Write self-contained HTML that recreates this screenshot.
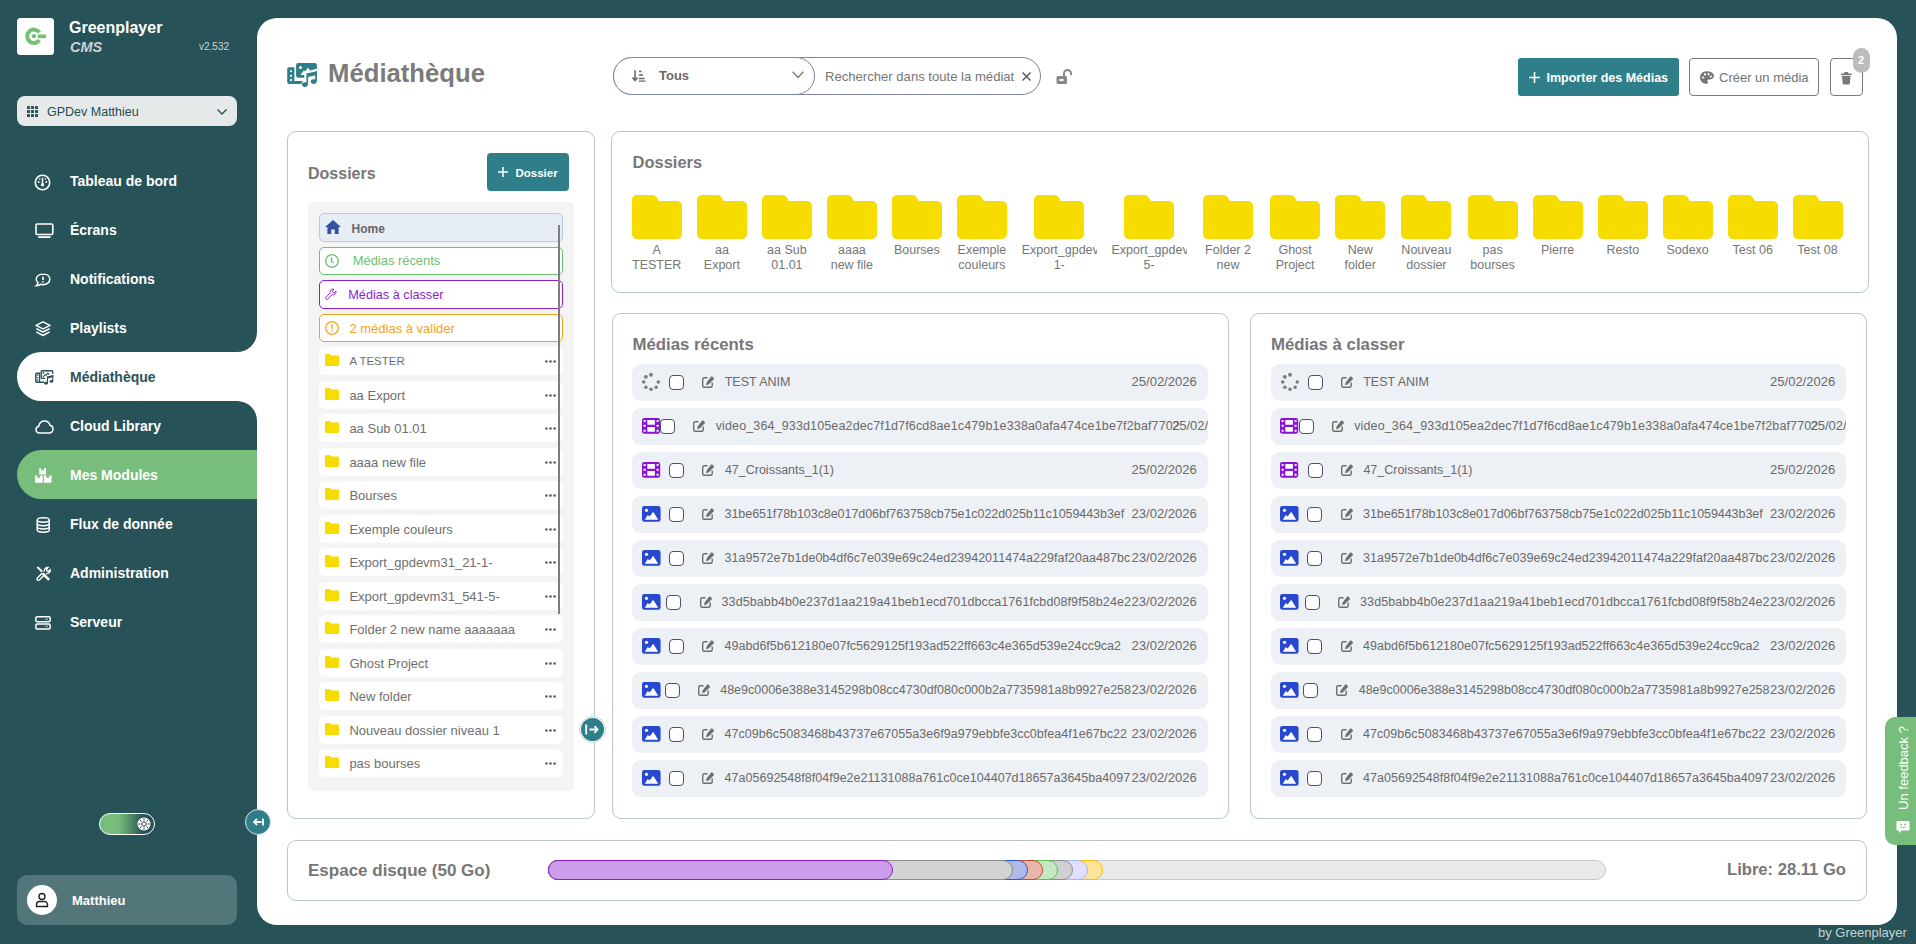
<!DOCTYPE html>
<html><head><meta charset="utf-8">
<style>
*{box-sizing:border-box;margin:0;padding:0}
html,body{width:1916px;height:944px;overflow:hidden}
body{background:#275258;font-family:"Liberation Sans",sans-serif;position:relative}
.a{position:absolute}
.t{position:absolute;white-space:nowrap;line-height:1}
svg{position:absolute;overflow:visible}
#main{left:257px;top:18px;width:1640px;height:907px;background:#fff;border-radius:20px}
.nav{color:#fff;font-size:14px;font-weight:bold}
.card{border:1px solid #b7c8ca;border-radius:9px;background:#fff}
.h{color:#777;font-weight:bold}
.fold{background:#fff;border-radius:6px;height:28px;left:319px;width:244px}
.ftx{color:#6f6f6f;font-size:13px}
.dots{left:545px;width:11px;height:3px}
.row{background:#edf0f4;border-radius:9px;height:37px;overflow:hidden}
.rt{color:#6a6a6a;font-size:13px}
.cb{width:15px;height:15px;border:1px solid #4b4f6b;border-radius:4px;background:#fff}
.fl{color:#767676;font-size:12.5px;text-align:center;line-height:15px;white-space:normal}
</style></head><body>
<!-- main panel -->
<div class="a" id="main"></div>


<!-- header -->
<svg style="left:282px;top:56px" width="40" height="36" viewBox="0 0 40 36">
 <path d="M7.2 11.2H12.4V25H20.8L19.2 27.9H7.2a2 2 0 0 1-2-2V13.2a2 2 0 0 1 2-2z" fill="#2e7f89"/>
 <rect x="8" y="14.2" width="1.9" height="1.9" rx=".5" fill="#fff"/><rect x="8" y="18.8" width="1.9" height="1.9" rx=".5" fill="#fff"/><rect x="8" y="23.1" width="1.9" height="1.9" rx=".5" fill="#fff"/>
 <rect x="14.1" y="7.1" width="20.8" height="14.7" rx="2.2" fill="#2e7f89"/>
 <circle cx="18.5" cy="11.5" r="1.5" fill="#fff"/>
 <path d="M18.4 18.9 L21.8 14.4 L23.2 15.2 L26 11.8 L28.3 14.6 L35.5 12.4 V31 H22.3 V18.9Z" fill="#fff"/>
 <path d="M24.4 17.6 L34.9 15.3 V19 L26 21Z" fill="#2e7f89"/>
 <rect x="24.4" y="17.6" width="1.7" height="11" fill="#2e7f89"/>
 <rect x="33.1" y="15.3" width="1.8" height="10.5" fill="#2e7f89"/>
 <ellipse cx="22.9" cy="28.6" rx="2.9" ry="2.3" fill="#2e7f89"/>
 <ellipse cx="31.7" cy="25.6" rx="2.9" ry="2.3" fill="#2e7f89"/>
</svg>
<div class="t h" style="left:328px;top:61px;font-size:25.7px;color:#7b7b7b">Médiathèque</div>

<div class="a" style="left:613px;top:57px;width:428px;height:38px;border:1px solid #7d84a6;border-radius:19px;background:#fff"></div>
<div class="a" style="left:613px;top:57px;width:202px;height:38px;border:1px solid #7d84a6;border-radius:19px;background:#fff"></div>
<svg style="left:632px;top:70px" width="14" height="12" viewBox="0 0 14 12"><path d="M3 0v10M0.5 7.5 3 10.5 5.5 7.5" fill="none" stroke="#666" stroke-width="1.5"/><path d="M7 1.5h2.5M7 5h4M7 8.5h5.5M7 11.2h6.5" stroke="#666" stroke-width="1.3"/></svg>
<div class="t" style="left:659px;top:69px;color:#6a6a6a;font-size:13px;font-weight:bold">Tous</div>
<svg style="left:792px;top:71px" width="12" height="8" viewBox="0 0 12 8"><path d="M.7 .7 6 6.5 11.3 .7" fill="none" stroke="#777" stroke-width="1.3"/></svg>
<div class="t" style="left:825px;top:69.7px;color:#757575;font-size:13.1px">Rechercher dans toute la médiat</div>
<svg style="left:1022px;top:72px" width="9" height="9" viewBox="0 0 9 9"><path d="M.5 .5l8 8M8.5 .5l-8 8" stroke="#555" stroke-width="1.4"/></svg>
<svg style="left:1056px;top:69px" width="17" height="15" viewBox="0 0 17 15"><path d="M8 7V4.5a3.5 3.5 0 0 1 7 0V6" fill="none" stroke="#888" stroke-width="2"/><rect x="0.5" y="7" width="10.5" height="8" rx="1.5" fill="#888"/><rect x="3.5" y="10" width="4" height="2" fill="#fff"/></svg>

<div class="a" style="left:1518px;top:58px;width:161px;height:38px;background:#2e7f89;border-radius:3px"></div>
<svg style="left:1529px;top:72px" width="11" height="11" viewBox="0 0 11 11"><path d="M5.5 0v11M0 5.5h11" stroke="#fff" stroke-width="1.6"/></svg>
<div class="t" style="left:1546.5px;top:72px;color:#fff;font-size:12.5px;font-weight:bold">Importer des Médias</div>
<div class="a" style="left:1689px;top:58px;width:130px;height:38px;border:1px solid #7a7a7a;border-radius:4px;background:#fff"></div>
<svg style="left:1700px;top:71px" width="13" height="13" viewBox="0 0 13 13"><path d="M6.5 0.2C2.9 0.2 0 3 0 6.5s2.9 6.3 6.5 6.3c1 0 1.5-.6 1.5-1.3 0-.8-.7-1.1-.7-1.9s.6-1.2 1.4-1.2h1.6c2 0 3.7-1.5 3.7-3.6C14 2.1 10.6.2 6.5.2z" fill="#777"/><circle cx="3.2" cy="6.5" r="1.1" fill="#fff"/><circle cx="5" cy="3.4" r="1.1" fill="#fff"/><circle cx="8.5" cy="3.2" r="1.1" fill="#fff"/><circle cx="10.8" cy="5.5" r="1.1" fill="#fff"/></svg>
<div class="t" style="left:1719px;top:71px;color:#727272;font-size:13px">Créer un média</div>
<div class="a" style="left:1830px;top:58px;width:33px;height:38px;border:1px solid #7a7a7a;border-radius:4px;background:#fff"></div>
<svg style="left:1841px;top:71.5px" width="10.5" height="12.5" viewBox="0 0 11 13"><path d="M0 1.5h11v1.6H0z M3.5 0h4v1.5h-4z" fill="#7a7a7a"/><path d="M1 3.8h9l-.8 8.4c-.1.5-.4.8-.9.8H2.7c-.5 0-.8-.3-.9-.8z" fill="#7a7a7a"/></svg>
<div class="a" style="left:1853px;top:48px;width:17px;height:25px;background:#bcbcbc;border-radius:8.5px"></div>
<div class="t" style="left:1858px;top:54.5px;color:#fff;font-size:11px;font-weight:bold">2</div>

<!-- left card -->
<div class="a card" style="left:287px;top:131px;width:308px;height:688px"></div>
<div class="t h" style="left:308px;top:165.5px;font-size:16px">Dossiers</div>
<div class="a" style="left:487px;top:153px;width:82px;height:38px;background:#2e7f89;border-radius:4px"></div>
<svg style="left:498px;top:167px" width="10" height="10" viewBox="0 0 10 10"><path d="M5 0v10M0 5h10" stroke="#fff" stroke-width="1.5"/></svg>
<div class="t" style="left:515.5px;top:167.5px;color:#fff;font-size:11.5px;font-weight:bold">Dossier</div>
<div class="a" style="left:308px;top:202px;width:266px;height:589px;background:#f4f4f4;border-radius:5px"></div>
<div class="a" style="left:319px;top:213.2px;width:244px;height:28.5px;background:#e7edf5;border:1px solid #bcc8e2;border-radius:5px"></div>
<svg style="left:325px;top:219.7px" width="16" height="14" viewBox="0 0 16 14"><path d="M8 0 L16 7 H13.6 V14 H9.8 V9.5 H6.2 V14 H2.4 V7 H0Z" fill="#3552a0"/></svg>
<div class="t" style="left:351.5px;top:222.7px;color:#666;font-size:12px;font-weight:bold">Home</div>
<div class="a" style="left:319px;top:246.7px;width:244px;height:28.5px;background:#fff;border:1px solid #6cbf71;border-radius:5px"></div>
<div class="t" style="left:352.8px;top:255.2px;color:#6cbf71;font-size:12.9px">Médias récents</div>
<div class="a" style="left:319px;top:280.2px;width:244px;height:28.5px;background:#fff;border:1px solid #8a1fc8;border-radius:5px"></div>
<div class="t" style="left:348.3px;top:288.7px;color:#8a1fc8;font-size:12.7px">Médias à classer</div>
<div class="a" style="left:319px;top:313.7px;width:244px;height:28.5px;background:#fff;border:1px solid #f5a31b;border-radius:5px"></div>
<div class="t" style="left:349.4px;top:322.2px;color:#f5a31b;font-size:13px">2 médias à valider</div>
<svg style="left:325px;top:253.7px" width="14" height="14" viewBox="0 0 14 14"><circle cx="7" cy="7" r="6.3" fill="none" stroke="#6cbf71" stroke-width="1.3"/><path d="M6.6 3.2v4l2.2 1.8" fill="none" stroke="#6cbf71" stroke-width="1.3"/></svg>
<svg style="left:325px;top:288.2px" width="12" height="12" viewBox="0 0 12 12"><path d="M11 3.3 9.2 5 7.3 3.4 8.6 1.2C7 .5 5.3 1.6 5.2 3.5c0 .5.1.9.2 1.3L.9 9.3c-.5.5-.5 1.2 0 1.7s1.2.5 1.7 0l4.5-4.4c.4.1.8.2 1.3.2 1.9-.1 3-1.8 2.6-3.5z" fill="none" stroke="#8a1fc8" stroke-width="1"/></svg>
<svg style="left:325px;top:320.7px" width="14" height="14" viewBox="0 0 14 14"><circle cx="7" cy="7" r="6.3" fill="none" stroke="#f5a31b" stroke-width="1.3"/><path d="M7 3.5v4.2" stroke="#f5a31b" stroke-width="1.4"/><circle cx="7" cy="10" r=".8" fill="#f5a31b"/></svg>
<div class="a fold" style="top:347.2px"></div>
<svg style="left:325px;top:354.2px" width="14" height="12" viewBox="0 0 14 12"><path d="M0 1.2C0 .5.5 0 1.2 0h3.6l1.4 1.6h6.6c.7 0 1.2.5 1.2 1.2v8c0 .7-.5 1.2-1.2 1.2H1.2C.5 12 0 11.5 0 10.8z" fill="#f7dc00"/></svg>
<div class="t ftx" style="left:349.4px;top:355.5px;font-size:11.5px">A TESTER</div>
<svg style="left:545px;top:360.2px" width="11" height="3" viewBox="0 0 11 3" fill="#555a70"><circle cx="1.4" cy="1.5" r="1.3"/><circle cx="5.5" cy="1.5" r="1.3"/><circle cx="9.6" cy="1.5" r="1.3"/></svg>
<div class="a fold" style="top:380.7px"></div>
<svg style="left:325px;top:387.7px" width="14" height="12" viewBox="0 0 14 12"><path d="M0 1.2C0 .5.5 0 1.2 0h3.6l1.4 1.6h6.6c.7 0 1.2.5 1.2 1.2v8c0 .7-.5 1.2-1.2 1.2H1.2C.5 12 0 11.5 0 10.8z" fill="#f7dc00"/></svg>
<div class="t ftx" style="left:349.4px;top:388.5px">aa Export</div>
<svg style="left:545px;top:393.7px" width="11" height="3" viewBox="0 0 11 3" fill="#555a70"><circle cx="1.4" cy="1.5" r="1.3"/><circle cx="5.5" cy="1.5" r="1.3"/><circle cx="9.6" cy="1.5" r="1.3"/></svg>
<div class="a fold" style="top:414.2px"></div>
<svg style="left:325px;top:421.2px" width="14" height="12" viewBox="0 0 14 12"><path d="M0 1.2C0 .5.5 0 1.2 0h3.6l1.4 1.6h6.6c.7 0 1.2.5 1.2 1.2v8c0 .7-.5 1.2-1.2 1.2H1.2C.5 12 0 11.5 0 10.8z" fill="#f7dc00"/></svg>
<div class="t ftx" style="left:349.4px;top:422.0px">aa Sub 01.01</div>
<svg style="left:545px;top:427.2px" width="11" height="3" viewBox="0 0 11 3" fill="#555a70"><circle cx="1.4" cy="1.5" r="1.3"/><circle cx="5.5" cy="1.5" r="1.3"/><circle cx="9.6" cy="1.5" r="1.3"/></svg>
<div class="a fold" style="top:447.7px"></div>
<svg style="left:325px;top:454.7px" width="14" height="12" viewBox="0 0 14 12"><path d="M0 1.2C0 .5.5 0 1.2 0h3.6l1.4 1.6h6.6c.7 0 1.2.5 1.2 1.2v8c0 .7-.5 1.2-1.2 1.2H1.2C.5 12 0 11.5 0 10.8z" fill="#f7dc00"/></svg>
<div class="t ftx" style="left:349.4px;top:455.5px">aaaa new file</div>
<svg style="left:545px;top:460.7px" width="11" height="3" viewBox="0 0 11 3" fill="#555a70"><circle cx="1.4" cy="1.5" r="1.3"/><circle cx="5.5" cy="1.5" r="1.3"/><circle cx="9.6" cy="1.5" r="1.3"/></svg>
<div class="a fold" style="top:481.2px"></div>
<svg style="left:325px;top:488.2px" width="14" height="12" viewBox="0 0 14 12"><path d="M0 1.2C0 .5.5 0 1.2 0h3.6l1.4 1.6h6.6c.7 0 1.2.5 1.2 1.2v8c0 .7-.5 1.2-1.2 1.2H1.2C.5 12 0 11.5 0 10.8z" fill="#f7dc00"/></svg>
<div class="t ftx" style="left:349.4px;top:489.0px">Bourses</div>
<svg style="left:545px;top:494.2px" width="11" height="3" viewBox="0 0 11 3" fill="#555a70"><circle cx="1.4" cy="1.5" r="1.3"/><circle cx="5.5" cy="1.5" r="1.3"/><circle cx="9.6" cy="1.5" r="1.3"/></svg>
<div class="a fold" style="top:514.7px"></div>
<svg style="left:325px;top:521.7px" width="14" height="12" viewBox="0 0 14 12"><path d="M0 1.2C0 .5.5 0 1.2 0h3.6l1.4 1.6h6.6c.7 0 1.2.5 1.2 1.2v8c0 .7-.5 1.2-1.2 1.2H1.2C.5 12 0 11.5 0 10.8z" fill="#f7dc00"/></svg>
<div class="t ftx" style="left:349.4px;top:522.5px">Exemple couleurs</div>
<svg style="left:545px;top:527.7px" width="11" height="3" viewBox="0 0 11 3" fill="#555a70"><circle cx="1.4" cy="1.5" r="1.3"/><circle cx="5.5" cy="1.5" r="1.3"/><circle cx="9.6" cy="1.5" r="1.3"/></svg>
<div class="a fold" style="top:548.2px"></div>
<svg style="left:325px;top:555.2px" width="14" height="12" viewBox="0 0 14 12"><path d="M0 1.2C0 .5.5 0 1.2 0h3.6l1.4 1.6h6.6c.7 0 1.2.5 1.2 1.2v8c0 .7-.5 1.2-1.2 1.2H1.2C.5 12 0 11.5 0 10.8z" fill="#f7dc00"/></svg>
<div class="t ftx" style="left:349.4px;top:556.0px">Export_gpdevm31_21-1-</div>
<svg style="left:545px;top:561.2px" width="11" height="3" viewBox="0 0 11 3" fill="#555a70"><circle cx="1.4" cy="1.5" r="1.3"/><circle cx="5.5" cy="1.5" r="1.3"/><circle cx="9.6" cy="1.5" r="1.3"/></svg>
<div class="a fold" style="top:581.7px"></div>
<svg style="left:325px;top:588.7px" width="14" height="12" viewBox="0 0 14 12"><path d="M0 1.2C0 .5.5 0 1.2 0h3.6l1.4 1.6h6.6c.7 0 1.2.5 1.2 1.2v8c0 .7-.5 1.2-1.2 1.2H1.2C.5 12 0 11.5 0 10.8z" fill="#f7dc00"/></svg>
<div class="t ftx" style="left:349.4px;top:589.5px">Export_gpdevm31_541-5-</div>
<svg style="left:545px;top:594.7px" width="11" height="3" viewBox="0 0 11 3" fill="#555a70"><circle cx="1.4" cy="1.5" r="1.3"/><circle cx="5.5" cy="1.5" r="1.3"/><circle cx="9.6" cy="1.5" r="1.3"/></svg>
<div class="a fold" style="top:615.2px"></div>
<svg style="left:325px;top:622.2px" width="14" height="12" viewBox="0 0 14 12"><path d="M0 1.2C0 .5.5 0 1.2 0h3.6l1.4 1.6h6.6c.7 0 1.2.5 1.2 1.2v8c0 .7-.5 1.2-1.2 1.2H1.2C.5 12 0 11.5 0 10.8z" fill="#f7dc00"/></svg>
<div class="t ftx" style="left:349.4px;top:623.0px">Folder 2 new name aaaaaaa</div>
<svg style="left:545px;top:628.2px" width="11" height="3" viewBox="0 0 11 3" fill="#555a70"><circle cx="1.4" cy="1.5" r="1.3"/><circle cx="5.5" cy="1.5" r="1.3"/><circle cx="9.6" cy="1.5" r="1.3"/></svg>
<div class="a fold" style="top:648.7px"></div>
<svg style="left:325px;top:655.7px" width="14" height="12" viewBox="0 0 14 12"><path d="M0 1.2C0 .5.5 0 1.2 0h3.6l1.4 1.6h6.6c.7 0 1.2.5 1.2 1.2v8c0 .7-.5 1.2-1.2 1.2H1.2C.5 12 0 11.5 0 10.8z" fill="#f7dc00"/></svg>
<div class="t ftx" style="left:349.4px;top:656.5px">Ghost Project</div>
<svg style="left:545px;top:661.7px" width="11" height="3" viewBox="0 0 11 3" fill="#555a70"><circle cx="1.4" cy="1.5" r="1.3"/><circle cx="5.5" cy="1.5" r="1.3"/><circle cx="9.6" cy="1.5" r="1.3"/></svg>
<div class="a fold" style="top:682.2px"></div>
<svg style="left:325px;top:689.2px" width="14" height="12" viewBox="0 0 14 12"><path d="M0 1.2C0 .5.5 0 1.2 0h3.6l1.4 1.6h6.6c.7 0 1.2.5 1.2 1.2v8c0 .7-.5 1.2-1.2 1.2H1.2C.5 12 0 11.5 0 10.8z" fill="#f7dc00"/></svg>
<div class="t ftx" style="left:349.4px;top:690.0px">New folder</div>
<svg style="left:545px;top:695.2px" width="11" height="3" viewBox="0 0 11 3" fill="#555a70"><circle cx="1.4" cy="1.5" r="1.3"/><circle cx="5.5" cy="1.5" r="1.3"/><circle cx="9.6" cy="1.5" r="1.3"/></svg>
<div class="a fold" style="top:715.7px"></div>
<svg style="left:325px;top:722.7px" width="14" height="12" viewBox="0 0 14 12"><path d="M0 1.2C0 .5.5 0 1.2 0h3.6l1.4 1.6h6.6c.7 0 1.2.5 1.2 1.2v8c0 .7-.5 1.2-1.2 1.2H1.2C.5 12 0 11.5 0 10.8z" fill="#f7dc00"/></svg>
<div class="t ftx" style="left:349.4px;top:723.5px">Nouveau dossier niveau 1</div>
<svg style="left:545px;top:728.7px" width="11" height="3" viewBox="0 0 11 3" fill="#555a70"><circle cx="1.4" cy="1.5" r="1.3"/><circle cx="5.5" cy="1.5" r="1.3"/><circle cx="9.6" cy="1.5" r="1.3"/></svg>
<div class="a fold" style="top:749.2px"></div>
<svg style="left:325px;top:756.2px" width="14" height="12" viewBox="0 0 14 12"><path d="M0 1.2C0 .5.5 0 1.2 0h3.6l1.4 1.6h6.6c.7 0 1.2.5 1.2 1.2v8c0 .7-.5 1.2-1.2 1.2H1.2C.5 12 0 11.5 0 10.8z" fill="#f7dc00"/></svg>
<div class="t ftx" style="left:349.4px;top:757.0px">pas bourses</div>
<svg style="left:545px;top:762.2px" width="11" height="3" viewBox="0 0 11 3" fill="#555a70"><circle cx="1.4" cy="1.5" r="1.3"/><circle cx="5.5" cy="1.5" r="1.3"/><circle cx="9.6" cy="1.5" r="1.3"/></svg>
<div class="a" style="left:558px;top:225px;width:2px;height:389px;background:#7e7e7e"></div>
<div class="a" style="left:579px;top:716px;width:27px;height:27px;border-radius:14px;background:#fff;border:1px solid #c6d6d8"></div>
<div class="a" style="left:581px;top:718px;width:23px;height:23px;border-radius:12px;background:#2e7f89"></div>
<svg style="left:585px;top:723px" width="14" height="13" viewBox="0 0 14 13"><path d="M1.2 1.5v10M4.5 6.5h8M9.5 3.2l3 3.3-3 3.3" fill="none" stroke="#fff" stroke-width="1.8"/></svg>







<!-- bottom start -->
<div class="a card" style="left:287px;top:839.5px;width:1579.5px;height:61px"></div>
<div class="t h" style="left:308px;top:862px;font-size:17px">Espace disque (50 Go)</div>
<div class="t h" style="left:1727px;top:862px;font-size:16.6px;text-align:right">Libre: 28.11 Go</div>
<div class="a" style="left:547.5px;top:860px;width:1058.0px;height:20px;background:#e9e9e9;border:1px solid #c9c9c9;border-radius:10px"></div>
<div class="a" style="left:547.5px;top:860px;width:555.4px;height:20px;background:#fde49b;border:1.2px solid #f9bd10;border-radius:10px"></div>
<div class="a" style="left:547.5px;top:860px;width:540.2px;height:20px;background:#e0e0fd;border:1.2px solid #abb2fb;border-radius:10px"></div>
<div class="a" style="left:547.5px;top:860px;width:525.1px;height:20px;background:#d0d0d0;border:1.2px solid #8c8c8c;border-radius:10px"></div>
<div class="a" style="left:547.5px;top:860px;width:510.5px;height:20px;background:#c2e9c0;border:1.2px solid #5fc15a;border-radius:10px"></div>
<div class="a" style="left:547.5px;top:860px;width:495.2px;height:20px;background:#e8b7a9;border:1.2px solid #cf4b2f;border-radius:10px"></div>
<div class="a" style="left:547.5px;top:860px;width:480.1px;height:20px;background:#aebbe9;border:1.2px solid #2f56d8;border-radius:10px"></div>
<div class="a" style="left:547.5px;top:860px;width:465.2px;height:20px;background:#d3d3d3;border:1.2px solid #8c8c8c;border-radius:10px"></div>
<div class="a" style="left:547.5px;top:860px;width:345.4px;height:20px;background:#cc9dea;border:1.2px solid #8a1fc8;border-radius:10px"></div>
<div class="a" style="left:1885px;top:717px;width:40px;height:128px;background:#77bd7b;border-radius:10px"></div>
<div class="t" style="left:1903px;top:768px;color:#fff;font-size:13px;transform:translate(-50%,-50%) rotate(-90deg)">Un feedback ?</div>
<svg style="left:1896px;top:820px" width="14" height="14" viewBox="0 0 14 14"><path d="M1.5 1h11c.6 0 1 .4 1 1v7.5c0 .6-.4 1-1 1H6l-3 2.5v-2.5H1.5c-.6 0-1-.4-1-1V2c0-.6.4-1 1-1z" fill="#fff"/><circle cx="5" cy="4.5" r=".9" fill="#77bd7b"/><circle cx="9" cy="4.5" r=".9" fill="#77bd7b"/><path d="M4.2 6.8c1.5 1.3 4.1 1.3 5.6 0" fill="none" stroke="#77bd7b" stroke-width="1"/></svg>
<!-- bottom end -->


<!-- right start -->
<div class="a card" style="left:611px;top:131px;width:1258px;height:162px"></div>
<div class="t h" style="left:632.5px;top:154px;font-size:16.5px">Dossiers</div>
<svg style="left:631.7px;top:195px" width="50" height="44" viewBox="0 0 50 44"><path d="M0 5C0 2.2 2.2 0 5 0h15.5c1.6 0 3 .8 3.9 2l2.6 4H45c2.8 0 5 2.2 5 5v28c0 2.8-2.2 5-5 5H5c-2.8 0-5-2.2-5-5z" fill="#f7dc00"/></svg>
<div class="a fl" style="left:631.7px;top:243px;width:50px;overflow:hidden"><span style="white-space:nowrap">A</span><br><span style="white-space:nowrap">TESTER</span></div>
<svg style="left:696.9px;top:195px" width="50" height="44" viewBox="0 0 50 44"><path d="M0 5C0 2.2 2.2 0 5 0h15.5c1.6 0 3 .8 3.9 2l2.6 4H45c2.8 0 5 2.2 5 5v28c0 2.8-2.2 5-5 5H5c-2.8 0-5-2.2-5-5z" fill="#f7dc00"/></svg>
<div class="a fl" style="left:696.9px;top:243px;width:50px;overflow:hidden"><span style="white-space:nowrap">aa</span><br><span style="white-space:nowrap">Export</span></div>
<svg style="left:761.9px;top:195px" width="50" height="44" viewBox="0 0 50 44"><path d="M0 5C0 2.2 2.2 0 5 0h15.5c1.6 0 3 .8 3.9 2l2.6 4H45c2.8 0 5 2.2 5 5v28c0 2.8-2.2 5-5 5H5c-2.8 0-5-2.2-5-5z" fill="#f7dc00"/></svg>
<div class="a fl" style="left:761.9px;top:243px;width:50px;overflow:hidden"><span style="white-space:nowrap">aa Sub</span><br><span style="white-space:nowrap">01.01</span></div>
<svg style="left:826.9px;top:195px" width="50" height="44" viewBox="0 0 50 44"><path d="M0 5C0 2.2 2.2 0 5 0h15.5c1.6 0 3 .8 3.9 2l2.6 4H45c2.8 0 5 2.2 5 5v28c0 2.8-2.2 5-5 5H5c-2.8 0-5-2.2-5-5z" fill="#f7dc00"/></svg>
<div class="a fl" style="left:826.9px;top:243px;width:50px;overflow:hidden"><span style="white-space:nowrap">aaaa</span><br><span style="white-space:nowrap">new file</span></div>
<svg style="left:891.9px;top:195px" width="50" height="44" viewBox="0 0 50 44"><path d="M0 5C0 2.2 2.2 0 5 0h15.5c1.6 0 3 .8 3.9 2l2.6 4H45c2.8 0 5 2.2 5 5v28c0 2.8-2.2 5-5 5H5c-2.8 0-5-2.2-5-5z" fill="#f7dc00"/></svg>
<div class="a fl" style="left:891.9px;top:243px;width:50px;overflow:hidden"><span style="white-space:nowrap">Bourses</span></div>
<svg style="left:956.9px;top:195px" width="50" height="44" viewBox="0 0 50 44"><path d="M0 5C0 2.2 2.2 0 5 0h15.5c1.6 0 3 .8 3.9 2l2.6 4H45c2.8 0 5 2.2 5 5v28c0 2.8-2.2 5-5 5H5c-2.8 0-5-2.2-5-5z" fill="#f7dc00"/></svg>
<div class="a fl" style="left:956.9px;top:243px;width:50px;overflow:hidden"><span style="white-space:nowrap">Exemple</span><br><span style="white-space:nowrap">couleurs</span></div>
<svg style="left:1034.2px;top:195px" width="50" height="44" viewBox="0 0 50 44"><path d="M0 5C0 2.2 2.2 0 5 0h15.5c1.6 0 3 .8 3.9 2l2.6 4H45c2.8 0 5 2.2 5 5v28c0 2.8-2.2 5-5 5H5c-2.8 0-5-2.2-5-5z" fill="#f7dc00"/></svg>
<div class="a fl" style="left:1021.7px;top:243px;width:75px;overflow:hidden"><span style="white-space:nowrap">Export_gpdevm31_21-</span><br><span style="white-space:nowrap">1-</span></div>
<svg style="left:1124.0px;top:195px" width="50" height="44" viewBox="0 0 50 44"><path d="M0 5C0 2.2 2.2 0 5 0h15.5c1.6 0 3 .8 3.9 2l2.6 4H45c2.8 0 5 2.2 5 5v28c0 2.8-2.2 5-5 5H5c-2.8 0-5-2.2-5-5z" fill="#f7dc00"/></svg>
<div class="a fl" style="left:1111.5px;top:243px;width:75px;overflow:hidden"><span style="white-space:nowrap">Export_gpdevm31_541-</span><br><span style="white-space:nowrap">5-</span></div>
<svg style="left:1203.0px;top:195px" width="50" height="44" viewBox="0 0 50 44"><path d="M0 5C0 2.2 2.2 0 5 0h15.5c1.6 0 3 .8 3.9 2l2.6 4H45c2.8 0 5 2.2 5 5v28c0 2.8-2.2 5-5 5H5c-2.8 0-5-2.2-5-5z" fill="#f7dc00"/></svg>
<div class="a fl" style="left:1201.5px;top:243px;width:53px;overflow:hidden"><span style="white-space:nowrap">Folder 2</span><br><span style="white-space:nowrap">new</span></div>
<svg style="left:1270.1px;top:195px" width="50" height="44" viewBox="0 0 50 44"><path d="M0 5C0 2.2 2.2 0 5 0h15.5c1.6 0 3 .8 3.9 2l2.6 4H45c2.8 0 5 2.2 5 5v28c0 2.8-2.2 5-5 5H5c-2.8 0-5-2.2-5-5z" fill="#f7dc00"/></svg>
<div class="a fl" style="left:1269.6px;top:243px;width:51px;overflow:hidden"><span style="white-space:nowrap">Ghost</span><br><span style="white-space:nowrap">Project</span></div>
<svg style="left:1335.2px;top:195px" width="50" height="44" viewBox="0 0 50 44"><path d="M0 5C0 2.2 2.2 0 5 0h15.5c1.6 0 3 .8 3.9 2l2.6 4H45c2.8 0 5 2.2 5 5v28c0 2.8-2.2 5-5 5H5c-2.8 0-5-2.2-5-5z" fill="#f7dc00"/></svg>
<div class="a fl" style="left:1335.2px;top:243px;width:50px;overflow:hidden"><span style="white-space:nowrap">New</span><br><span style="white-space:nowrap">folder</span></div>
<svg style="left:1401.4px;top:195px" width="50" height="44" viewBox="0 0 50 44"><path d="M0 5C0 2.2 2.2 0 5 0h15.5c1.6 0 3 .8 3.9 2l2.6 4H45c2.8 0 5 2.2 5 5v28c0 2.8-2.2 5-5 5H5c-2.8 0-5-2.2-5-5z" fill="#f7dc00"/></svg>
<div class="a fl" style="left:1400.4px;top:243px;width:52px;overflow:hidden"><span style="white-space:nowrap">Nouveau</span><br><span style="white-space:nowrap">dossier</span></div>
<svg style="left:1467.6px;top:195px" width="50" height="44" viewBox="0 0 50 44"><path d="M0 5C0 2.2 2.2 0 5 0h15.5c1.6 0 3 .8 3.9 2l2.6 4H45c2.8 0 5 2.2 5 5v28c0 2.8-2.2 5-5 5H5c-2.8 0-5-2.2-5-5z" fill="#f7dc00"/></svg>
<div class="a fl" style="left:1467.6px;top:243px;width:50px;overflow:hidden"><span style="white-space:nowrap">pas</span><br><span style="white-space:nowrap">bourses</span></div>
<svg style="left:1532.6px;top:195px" width="50" height="44" viewBox="0 0 50 44"><path d="M0 5C0 2.2 2.2 0 5 0h15.5c1.6 0 3 .8 3.9 2l2.6 4H45c2.8 0 5 2.2 5 5v28c0 2.8-2.2 5-5 5H5c-2.8 0-5-2.2-5-5z" fill="#f7dc00"/></svg>
<div class="a fl" style="left:1532.6px;top:243px;width:50px;overflow:hidden"><span style="white-space:nowrap">Pierre</span></div>
<svg style="left:1597.8px;top:195px" width="50" height="44" viewBox="0 0 50 44"><path d="M0 5C0 2.2 2.2 0 5 0h15.5c1.6 0 3 .8 3.9 2l2.6 4H45c2.8 0 5 2.2 5 5v28c0 2.8-2.2 5-5 5H5c-2.8 0-5-2.2-5-5z" fill="#f7dc00"/></svg>
<div class="a fl" style="left:1597.8px;top:243px;width:50px;overflow:hidden"><span style="white-space:nowrap">Resto</span></div>
<svg style="left:1662.6px;top:195px" width="50" height="44" viewBox="0 0 50 44"><path d="M0 5C0 2.2 2.2 0 5 0h15.5c1.6 0 3 .8 3.9 2l2.6 4H45c2.8 0 5 2.2 5 5v28c0 2.8-2.2 5-5 5H5c-2.8 0-5-2.2-5-5z" fill="#f7dc00"/></svg>
<div class="a fl" style="left:1662.6px;top:243px;width:50px;overflow:hidden"><span style="white-space:nowrap">Sodexo</span></div>
<svg style="left:1727.7px;top:195px" width="50" height="44" viewBox="0 0 50 44"><path d="M0 5C0 2.2 2.2 0 5 0h15.5c1.6 0 3 .8 3.9 2l2.6 4H45c2.8 0 5 2.2 5 5v28c0 2.8-2.2 5-5 5H5c-2.8 0-5-2.2-5-5z" fill="#f7dc00"/></svg>
<div class="a fl" style="left:1727.7px;top:243px;width:50px;overflow:hidden"><span style="white-space:nowrap">Test 06</span></div>
<svg style="left:1792.5px;top:195px" width="50" height="44" viewBox="0 0 50 44"><path d="M0 5C0 2.2 2.2 0 5 0h15.5c1.6 0 3 .8 3.9 2l2.6 4H45c2.8 0 5 2.2 5 5v28c0 2.8-2.2 5-5 5H5c-2.8 0-5-2.2-5-5z" fill="#f7dc00"/></svg>
<div class="a fl" style="left:1792.5px;top:243px;width:50px;overflow:hidden"><span style="white-space:nowrap">Test 08</span></div>
<div class="a card" style="left:611.6px;top:313px;width:617px;height:506px"></div>
<div class="t h" style="left:632.5px;top:337.4px;font-size:16.8px">Médias récents</div>
<div class="a row" style="left:632.2px;top:364px;width:576px">
<div class="t rt" style="left:92.5px;top:11.8px;font-size:12.5px;letter-spacing:0.000px">TEST ANIM</div>
<div class="t rt" style="left:499.4px;top:11.4px;font-size:13px">25/02/2026</div>
</div>
<svg style="left:641.0px;top:372.2px" width="20" height="20" viewBox="-10 -10 20 20" fill="#7d7d7d"><circle cx="0.00" cy="-7.30" r="1.95"/><circle cx="-5.16" cy="-5.16" r="1.95"/><circle cx="-7.30" cy="0.00" r="1.8"/><circle cx="-5.16" cy="5.16" r="1.75"/><circle cx="0.00" cy="7.30" r="1.75"/><circle cx="5.16" cy="5.16" r="1.75"/><circle cx="7.30" cy="0.00" r="1.75"/></svg>
<div class="a cb" style="left:669.0px;top:374.9px"></div>
<svg style="left:702.0px;top:375.9px" width="12.5" height="12" viewBox="0 0 12.5 12"><path d="M5.5 1.8H2.2C1.3 1.8.7 2.4.7 3.3v6.5c0 .9.6 1.5 1.5 1.5h6.5c.9 0 1.5-.6 1.5-1.5V6.5" fill="none" stroke="#6e6e6e" stroke-width="1.4"/><path d="M10.3.6l1.5 1.5c.3.3.3.8 0 1.1L6.6 8.4 4 9l.6-2.6L9.2.6c.3-.3.8-.3 1.1 0z" fill="#6e6e6e"/></svg>
<div class="a row" style="left:632.2px;top:408px;width:576px">
<div class="t rt" style="left:83.5px;top:11.8px;font-size:12.5px;letter-spacing:0.140px">video_364_933d105ea2dec7f1d7f6cd8ae1c479b1e338a0afa474ce1be7f2baf7702</div>
<div class="t rt" style="left:539.8px;top:11.4px;font-size:13px">25/02/2026</div>
</div>
<svg style="left:641.9px;top:418.3px" width="18.2" height="15.7" viewBox="0 0 18.2 15.7"><rect width="18.2" height="15.7" rx="2.5" fill="#8a14d6"/><g fill="#fff"><rect x="1.6" y="2" width="2" height="2" rx=".3"/><rect x="1.6" y="6.85" width="2" height="2" rx=".3"/><rect x="1.6" y="11.7" width="2" height="2" rx=".3"/><rect x="14.6" y="2" width="2" height="2" rx=".3"/><rect x="14.6" y="6.85" width="2" height="2" rx=".3"/><rect x="14.6" y="11.7" width="2" height="2" rx=".3"/><rect x="5.3" y="2" width="7.6" height="4.8" rx=".4"/><rect x="5.3" y="8.9" width="7.6" height="4.8" rx=".4"/></g></svg>
<div class="a cb" style="left:660.4px;top:418.9px"></div>
<svg style="left:693.0px;top:419.9px" width="12.5" height="12" viewBox="0 0 12.5 12"><path d="M5.5 1.8H2.2C1.3 1.8.7 2.4.7 3.3v6.5c0 .9.6 1.5 1.5 1.5h6.5c.9 0 1.5-.6 1.5-1.5V6.5" fill="none" stroke="#6e6e6e" stroke-width="1.4"/><path d="M10.3.6l1.5 1.5c.3.3.3.8 0 1.1L6.6 8.4 4 9l.6-2.6L9.2.6c.3-.3.8-.3 1.1 0z" fill="#6e6e6e"/></svg>
<div class="a row" style="left:632.2px;top:452px;width:576px">
<div class="t rt" style="left:92.7px;top:11.8px;font-size:12.5px;letter-spacing:0.000px">47_Croissants_1(1)</div>
<div class="t rt" style="left:499.4px;top:11.4px;font-size:13px">25/02/2026</div>
</div>
<svg style="left:641.9px;top:462.3px" width="18.2" height="15.7" viewBox="0 0 18.2 15.7"><rect width="18.2" height="15.7" rx="2.5" fill="#8a14d6"/><g fill="#fff"><rect x="1.6" y="2" width="2" height="2" rx=".3"/><rect x="1.6" y="6.85" width="2" height="2" rx=".3"/><rect x="1.6" y="11.7" width="2" height="2" rx=".3"/><rect x="14.6" y="2" width="2" height="2" rx=".3"/><rect x="14.6" y="6.85" width="2" height="2" rx=".3"/><rect x="14.6" y="11.7" width="2" height="2" rx=".3"/><rect x="5.3" y="2" width="7.6" height="4.8" rx=".4"/><rect x="5.3" y="8.9" width="7.6" height="4.8" rx=".4"/></g></svg>
<div class="a cb" style="left:669.0px;top:462.9px"></div>
<svg style="left:702.2px;top:463.9px" width="12.5" height="12" viewBox="0 0 12.5 12"><path d="M5.5 1.8H2.2C1.3 1.8.7 2.4.7 3.3v6.5c0 .9.6 1.5 1.5 1.5h6.5c.9 0 1.5-.6 1.5-1.5V6.5" fill="none" stroke="#6e6e6e" stroke-width="1.4"/><path d="M10.3.6l1.5 1.5c.3.3.3.8 0 1.1L6.6 8.4 4 9l.6-2.6L9.2.6c.3-.3.8-.3 1.1 0z" fill="#6e6e6e"/></svg>
<div class="a row" style="left:632.2px;top:496px;width:576px">
<div class="t rt" style="left:92.4px;top:11.8px;font-size:12.5px;letter-spacing:-0.057px">31be651f78b103c8e017d06bf763758cb75e1c022d025b11c1059443b3ef</div>
<div class="t rt" style="left:499.4px;top:11.4px;font-size:13px">23/02/2026</div>
</div>
<svg style="left:641.9px;top:506.4px" width="18.6" height="15.7" viewBox="0 0 18.6 15.7"><rect width="18.6" height="15.7" rx="2.5" fill="#2848cf"/><circle cx="4.5" cy="4.3" r="1.6" fill="#fff"/><path d="M2.7 13.8 L5.8 9 L7.6 10.6 L11.2 5.7 L16.2 13.8Z" fill="#fff"/></svg>
<div class="a cb" style="left:668.6px;top:506.9px"></div>
<svg style="left:702.2px;top:507.9px" width="12.5" height="12" viewBox="0 0 12.5 12"><path d="M5.5 1.8H2.2C1.3 1.8.7 2.4.7 3.3v6.5c0 .9.6 1.5 1.5 1.5h6.5c.9 0 1.5-.6 1.5-1.5V6.5" fill="none" stroke="#6e6e6e" stroke-width="1.4"/><path d="M10.3.6l1.5 1.5c.3.3.3.8 0 1.1L6.6 8.4 4 9l.6-2.6L9.2.6c.3-.3.8-.3 1.1 0z" fill="#6e6e6e"/></svg>
<div class="a row" style="left:632.2px;top:540px;width:576px">
<div class="t rt" style="left:92.4px;top:11.8px;font-size:12.5px;letter-spacing:0.033px">31a9572e7b1de0b4df6c7e039e69c24ed23942011474a229faf20aa487bc</div>
<div class="t rt" style="left:499.4px;top:11.4px;font-size:13px">23/02/2026</div>
</div>
<svg style="left:641.9px;top:550.4px" width="18.6" height="15.7" viewBox="0 0 18.6 15.7"><rect width="18.6" height="15.7" rx="2.5" fill="#2848cf"/><circle cx="4.5" cy="4.3" r="1.6" fill="#fff"/><path d="M2.7 13.8 L5.8 9 L7.6 10.6 L11.2 5.7 L16.2 13.8Z" fill="#fff"/></svg>
<div class="a cb" style="left:668.6px;top:550.9px"></div>
<svg style="left:702.2px;top:551.9px" width="12.5" height="12" viewBox="0 0 12.5 12"><path d="M5.5 1.8H2.2C1.3 1.8.7 2.4.7 3.3v6.5c0 .9.6 1.5 1.5 1.5h6.5c.9 0 1.5-.6 1.5-1.5V6.5" fill="none" stroke="#6e6e6e" stroke-width="1.4"/><path d="M10.3.6l1.5 1.5c.3.3.3.8 0 1.1L6.6 8.4 4 9l.6-2.6L9.2.6c.3-.3.8-.3 1.1 0z" fill="#6e6e6e"/></svg>
<div class="a row" style="left:632.2px;top:584px;width:576px">
<div class="t rt" style="left:89.4px;top:11.8px;font-size:12.5px;letter-spacing:0.093px">33d5babb4b0e237d1aa219a41beb1ecd701dbcca1761fcbd08f9f58b24e2</div>
<div class="t rt" style="left:499.4px;top:11.4px;font-size:13px">23/02/2026</div>
</div>
<svg style="left:641.9px;top:594.4px" width="18.6" height="15.7" viewBox="0 0 18.6 15.7"><rect width="18.6" height="15.7" rx="2.5" fill="#2848cf"/><circle cx="4.5" cy="4.3" r="1.6" fill="#fff"/><path d="M2.7 13.8 L5.8 9 L7.6 10.6 L11.2 5.7 L16.2 13.8Z" fill="#fff"/></svg>
<div class="a cb" style="left:666.0px;top:594.9px"></div>
<svg style="left:699.8px;top:595.9px" width="12.5" height="12" viewBox="0 0 12.5 12"><path d="M5.5 1.8H2.2C1.3 1.8.7 2.4.7 3.3v6.5c0 .9.6 1.5 1.5 1.5h6.5c.9 0 1.5-.6 1.5-1.5V6.5" fill="none" stroke="#6e6e6e" stroke-width="1.4"/><path d="M10.3.6l1.5 1.5c.3.3.3.8 0 1.1L6.6 8.4 4 9l.6-2.6L9.2.6c.3-.3.8-.3 1.1 0z" fill="#6e6e6e"/></svg>
<div class="a row" style="left:632.2px;top:628px;width:576px">
<div class="t rt" style="left:92.4px;top:11.8px;font-size:12.5px;letter-spacing:0.008px">49abd6f5b612180e07fc5629125f193ad522ff663c4e365d539e24cc9ca2</div>
<div class="t rt" style="left:499.4px;top:11.4px;font-size:13px">23/02/2026</div>
</div>
<svg style="left:641.9px;top:638.4px" width="18.6" height="15.7" viewBox="0 0 18.6 15.7"><rect width="18.6" height="15.7" rx="2.5" fill="#2848cf"/><circle cx="4.5" cy="4.3" r="1.6" fill="#fff"/><path d="M2.7 13.8 L5.8 9 L7.6 10.6 L11.2 5.7 L16.2 13.8Z" fill="#fff"/></svg>
<div class="a cb" style="left:668.6px;top:638.9px"></div>
<svg style="left:702.2px;top:639.9px" width="12.5" height="12" viewBox="0 0 12.5 12"><path d="M5.5 1.8H2.2C1.3 1.8.7 2.4.7 3.3v6.5c0 .9.6 1.5 1.5 1.5h6.5c.9 0 1.5-.6 1.5-1.5V6.5" fill="none" stroke="#6e6e6e" stroke-width="1.4"/><path d="M10.3.6l1.5 1.5c.3.3.3.8 0 1.1L6.6 8.4 4 9l.6-2.6L9.2.6c.3-.3.8-.3 1.1 0z" fill="#6e6e6e"/></svg>
<div class="a row" style="left:632.2px;top:672px;width:576px">
<div class="t rt" style="left:88.0px;top:11.8px;font-size:12.5px;letter-spacing:0.000px">48e9c0006e388e3145298b08cc4730df080c000b2a7735981a8b9927e258</div>
<div class="t rt" style="left:499.4px;top:11.4px;font-size:13px">23/02/2026</div>
</div>
<svg style="left:641.9px;top:682.4px" width="18.6" height="15.7" viewBox="0 0 18.6 15.7"><rect width="18.6" height="15.7" rx="2.5" fill="#2848cf"/><circle cx="4.5" cy="4.3" r="1.6" fill="#fff"/><path d="M2.7 13.8 L5.8 9 L7.6 10.6 L11.2 5.7 L16.2 13.8Z" fill="#fff"/></svg>
<div class="a cb" style="left:664.9px;top:682.9px"></div>
<svg style="left:697.5px;top:683.9px" width="12.5" height="12" viewBox="0 0 12.5 12"><path d="M5.5 1.8H2.2C1.3 1.8.7 2.4.7 3.3v6.5c0 .9.6 1.5 1.5 1.5h6.5c.9 0 1.5-.6 1.5-1.5V6.5" fill="none" stroke="#6e6e6e" stroke-width="1.4"/><path d="M10.3.6l1.5 1.5c.3.3.3.8 0 1.1L6.6 8.4 4 9l.6-2.6L9.2.6c.3-.3.8-.3 1.1 0z" fill="#6e6e6e"/></svg>
<div class="a row" style="left:632.2px;top:716px;width:576px">
<div class="t rt" style="left:92.4px;top:11.8px;font-size:12.5px;letter-spacing:0.047px">47c09b6c5083468b43737e67055a3e6f9a979ebbfe3cc0bfea4f1e67bc22</div>
<div class="t rt" style="left:499.4px;top:11.4px;font-size:13px">23/02/2026</div>
</div>
<svg style="left:641.9px;top:726.4px" width="18.6" height="15.7" viewBox="0 0 18.6 15.7"><rect width="18.6" height="15.7" rx="2.5" fill="#2848cf"/><circle cx="4.5" cy="4.3" r="1.6" fill="#fff"/><path d="M2.7 13.8 L5.8 9 L7.6 10.6 L11.2 5.7 L16.2 13.8Z" fill="#fff"/></svg>
<div class="a cb" style="left:668.6px;top:726.9px"></div>
<svg style="left:702.2px;top:727.9px" width="12.5" height="12" viewBox="0 0 12.5 12"><path d="M5.5 1.8H2.2C1.3 1.8.7 2.4.7 3.3v6.5c0 .9.6 1.5 1.5 1.5h6.5c.9 0 1.5-.6 1.5-1.5V6.5" fill="none" stroke="#6e6e6e" stroke-width="1.4"/><path d="M10.3.6l1.5 1.5c.3.3.3.8 0 1.1L6.6 8.4 4 9l.6-2.6L9.2.6c.3-.3.8-.3 1.1 0z" fill="#6e6e6e"/></svg>
<div class="a row" style="left:632.2px;top:760px;width:576px">
<div class="t rt" style="left:92.4px;top:11.8px;font-size:12.5px;letter-spacing:0.020px">47a05692548f8f04f9e2e21131088a761c0ce104407d18657a3645ba4097</div>
<div class="t rt" style="left:499.4px;top:11.4px;font-size:13px">23/02/2026</div>
</div>
<svg style="left:641.9px;top:770.4px" width="18.6" height="15.7" viewBox="0 0 18.6 15.7"><rect width="18.6" height="15.7" rx="2.5" fill="#2848cf"/><circle cx="4.5" cy="4.3" r="1.6" fill="#fff"/><path d="M2.7 13.8 L5.8 9 L7.6 10.6 L11.2 5.7 L16.2 13.8Z" fill="#fff"/></svg>
<div class="a cb" style="left:668.6px;top:770.9px"></div>
<svg style="left:702.2px;top:771.9px" width="12.5" height="12" viewBox="0 0 12.5 12"><path d="M5.5 1.8H2.2C1.3 1.8.7 2.4.7 3.3v6.5c0 .9.6 1.5 1.5 1.5h6.5c.9 0 1.5-.6 1.5-1.5V6.5" fill="none" stroke="#6e6e6e" stroke-width="1.4"/><path d="M10.3.6l1.5 1.5c.3.3.3.8 0 1.1L6.6 8.4 4 9l.6-2.6L9.2.6c.3-.3.8-.3 1.1 0z" fill="#6e6e6e"/></svg>
<div class="a card" style="left:1250.1px;top:313px;width:616.6px;height:506px"></div>
<div class="t h" style="left:1271.0px;top:337.4px;font-size:16.8px">Médias à classer</div>
<div class="a row" style="left:1270.7px;top:364px;width:575.5px">
<div class="t rt" style="left:92.5px;top:11.8px;font-size:12.5px;letter-spacing:0.000px">TEST ANIM</div>
<div class="t rt" style="left:499.4px;top:11.4px;font-size:13px">25/02/2026</div>
</div>
<svg style="left:1279.5px;top:372.2px" width="20" height="20" viewBox="-10 -10 20 20" fill="#7d7d7d"><circle cx="0.00" cy="-7.30" r="1.95"/><circle cx="-5.16" cy="-5.16" r="1.95"/><circle cx="-7.30" cy="0.00" r="1.8"/><circle cx="-5.16" cy="5.16" r="1.75"/><circle cx="0.00" cy="7.30" r="1.75"/><circle cx="5.16" cy="5.16" r="1.75"/><circle cx="7.30" cy="0.00" r="1.75"/></svg>
<div class="a cb" style="left:1307.5px;top:374.9px"></div>
<svg style="left:1340.5px;top:375.9px" width="12.5" height="12" viewBox="0 0 12.5 12"><path d="M5.5 1.8H2.2C1.3 1.8.7 2.4.7 3.3v6.5c0 .9.6 1.5 1.5 1.5h6.5c.9 0 1.5-.6 1.5-1.5V6.5" fill="none" stroke="#6e6e6e" stroke-width="1.4"/><path d="M10.3.6l1.5 1.5c.3.3.3.8 0 1.1L6.6 8.4 4 9l.6-2.6L9.2.6c.3-.3.8-.3 1.1 0z" fill="#6e6e6e"/></svg>
<div class="a row" style="left:1270.7px;top:408px;width:575.5px">
<div class="t rt" style="left:83.5px;top:11.8px;font-size:12.5px;letter-spacing:0.140px">video_364_933d105ea2dec7f1d7f6cd8ae1c479b1e338a0afa474ce1be7f2baf7702</div>
<div class="t rt" style="left:539.8px;top:11.4px;font-size:13px">25/02/2026</div>
</div>
<svg style="left:1280.4px;top:418.3px" width="18.2" height="15.7" viewBox="0 0 18.2 15.7"><rect width="18.2" height="15.7" rx="2.5" fill="#8a14d6"/><g fill="#fff"><rect x="1.6" y="2" width="2" height="2" rx=".3"/><rect x="1.6" y="6.85" width="2" height="2" rx=".3"/><rect x="1.6" y="11.7" width="2" height="2" rx=".3"/><rect x="14.6" y="2" width="2" height="2" rx=".3"/><rect x="14.6" y="6.85" width="2" height="2" rx=".3"/><rect x="14.6" y="11.7" width="2" height="2" rx=".3"/><rect x="5.3" y="2" width="7.6" height="4.8" rx=".4"/><rect x="5.3" y="8.9" width="7.6" height="4.8" rx=".4"/></g></svg>
<div class="a cb" style="left:1298.9px;top:418.9px"></div>
<svg style="left:1331.5px;top:419.9px" width="12.5" height="12" viewBox="0 0 12.5 12"><path d="M5.5 1.8H2.2C1.3 1.8.7 2.4.7 3.3v6.5c0 .9.6 1.5 1.5 1.5h6.5c.9 0 1.5-.6 1.5-1.5V6.5" fill="none" stroke="#6e6e6e" stroke-width="1.4"/><path d="M10.3.6l1.5 1.5c.3.3.3.8 0 1.1L6.6 8.4 4 9l.6-2.6L9.2.6c.3-.3.8-.3 1.1 0z" fill="#6e6e6e"/></svg>
<div class="a row" style="left:1270.7px;top:452px;width:575.5px">
<div class="t rt" style="left:92.7px;top:11.8px;font-size:12.5px;letter-spacing:0.000px">47_Croissants_1(1)</div>
<div class="t rt" style="left:499.4px;top:11.4px;font-size:13px">25/02/2026</div>
</div>
<svg style="left:1280.4px;top:462.3px" width="18.2" height="15.7" viewBox="0 0 18.2 15.7"><rect width="18.2" height="15.7" rx="2.5" fill="#8a14d6"/><g fill="#fff"><rect x="1.6" y="2" width="2" height="2" rx=".3"/><rect x="1.6" y="6.85" width="2" height="2" rx=".3"/><rect x="1.6" y="11.7" width="2" height="2" rx=".3"/><rect x="14.6" y="2" width="2" height="2" rx=".3"/><rect x="14.6" y="6.85" width="2" height="2" rx=".3"/><rect x="14.6" y="11.7" width="2" height="2" rx=".3"/><rect x="5.3" y="2" width="7.6" height="4.8" rx=".4"/><rect x="5.3" y="8.9" width="7.6" height="4.8" rx=".4"/></g></svg>
<div class="a cb" style="left:1307.5px;top:462.9px"></div>
<svg style="left:1340.7px;top:463.9px" width="12.5" height="12" viewBox="0 0 12.5 12"><path d="M5.5 1.8H2.2C1.3 1.8.7 2.4.7 3.3v6.5c0 .9.6 1.5 1.5 1.5h6.5c.9 0 1.5-.6 1.5-1.5V6.5" fill="none" stroke="#6e6e6e" stroke-width="1.4"/><path d="M10.3.6l1.5 1.5c.3.3.3.8 0 1.1L6.6 8.4 4 9l.6-2.6L9.2.6c.3-.3.8-.3 1.1 0z" fill="#6e6e6e"/></svg>
<div class="a row" style="left:1270.7px;top:496px;width:575.5px">
<div class="t rt" style="left:92.4px;top:11.8px;font-size:12.5px;letter-spacing:-0.057px">31be651f78b103c8e017d06bf763758cb75e1c022d025b11c1059443b3ef</div>
<div class="t rt" style="left:499.4px;top:11.4px;font-size:13px">23/02/2026</div>
</div>
<svg style="left:1280.4px;top:506.4px" width="18.6" height="15.7" viewBox="0 0 18.6 15.7"><rect width="18.6" height="15.7" rx="2.5" fill="#2848cf"/><circle cx="4.5" cy="4.3" r="1.6" fill="#fff"/><path d="M2.7 13.8 L5.8 9 L7.6 10.6 L11.2 5.7 L16.2 13.8Z" fill="#fff"/></svg>
<div class="a cb" style="left:1307.1px;top:506.9px"></div>
<svg style="left:1340.7px;top:507.9px" width="12.5" height="12" viewBox="0 0 12.5 12"><path d="M5.5 1.8H2.2C1.3 1.8.7 2.4.7 3.3v6.5c0 .9.6 1.5 1.5 1.5h6.5c.9 0 1.5-.6 1.5-1.5V6.5" fill="none" stroke="#6e6e6e" stroke-width="1.4"/><path d="M10.3.6l1.5 1.5c.3.3.3.8 0 1.1L6.6 8.4 4 9l.6-2.6L9.2.6c.3-.3.8-.3 1.1 0z" fill="#6e6e6e"/></svg>
<div class="a row" style="left:1270.7px;top:540px;width:575.5px">
<div class="t rt" style="left:92.4px;top:11.8px;font-size:12.5px;letter-spacing:0.033px">31a9572e7b1de0b4df6c7e039e69c24ed23942011474a229faf20aa487bc</div>
<div class="t rt" style="left:499.4px;top:11.4px;font-size:13px">23/02/2026</div>
</div>
<svg style="left:1280.4px;top:550.4px" width="18.6" height="15.7" viewBox="0 0 18.6 15.7"><rect width="18.6" height="15.7" rx="2.5" fill="#2848cf"/><circle cx="4.5" cy="4.3" r="1.6" fill="#fff"/><path d="M2.7 13.8 L5.8 9 L7.6 10.6 L11.2 5.7 L16.2 13.8Z" fill="#fff"/></svg>
<div class="a cb" style="left:1307.1px;top:550.9px"></div>
<svg style="left:1340.7px;top:551.9px" width="12.5" height="12" viewBox="0 0 12.5 12"><path d="M5.5 1.8H2.2C1.3 1.8.7 2.4.7 3.3v6.5c0 .9.6 1.5 1.5 1.5h6.5c.9 0 1.5-.6 1.5-1.5V6.5" fill="none" stroke="#6e6e6e" stroke-width="1.4"/><path d="M10.3.6l1.5 1.5c.3.3.3.8 0 1.1L6.6 8.4 4 9l.6-2.6L9.2.6c.3-.3.8-.3 1.1 0z" fill="#6e6e6e"/></svg>
<div class="a row" style="left:1270.7px;top:584px;width:575.5px">
<div class="t rt" style="left:89.4px;top:11.8px;font-size:12.5px;letter-spacing:0.093px">33d5babb4b0e237d1aa219a41beb1ecd701dbcca1761fcbd08f9f58b24e2</div>
<div class="t rt" style="left:499.4px;top:11.4px;font-size:13px">23/02/2026</div>
</div>
<svg style="left:1280.4px;top:594.4px" width="18.6" height="15.7" viewBox="0 0 18.6 15.7"><rect width="18.6" height="15.7" rx="2.5" fill="#2848cf"/><circle cx="4.5" cy="4.3" r="1.6" fill="#fff"/><path d="M2.7 13.8 L5.8 9 L7.6 10.6 L11.2 5.7 L16.2 13.8Z" fill="#fff"/></svg>
<div class="a cb" style="left:1304.5px;top:594.9px"></div>
<svg style="left:1338.3px;top:595.9px" width="12.5" height="12" viewBox="0 0 12.5 12"><path d="M5.5 1.8H2.2C1.3 1.8.7 2.4.7 3.3v6.5c0 .9.6 1.5 1.5 1.5h6.5c.9 0 1.5-.6 1.5-1.5V6.5" fill="none" stroke="#6e6e6e" stroke-width="1.4"/><path d="M10.3.6l1.5 1.5c.3.3.3.8 0 1.1L6.6 8.4 4 9l.6-2.6L9.2.6c.3-.3.8-.3 1.1 0z" fill="#6e6e6e"/></svg>
<div class="a row" style="left:1270.7px;top:628px;width:575.5px">
<div class="t rt" style="left:92.4px;top:11.8px;font-size:12.5px;letter-spacing:0.008px">49abd6f5b612180e07fc5629125f193ad522ff663c4e365d539e24cc9ca2</div>
<div class="t rt" style="left:499.4px;top:11.4px;font-size:13px">23/02/2026</div>
</div>
<svg style="left:1280.4px;top:638.4px" width="18.6" height="15.7" viewBox="0 0 18.6 15.7"><rect width="18.6" height="15.7" rx="2.5" fill="#2848cf"/><circle cx="4.5" cy="4.3" r="1.6" fill="#fff"/><path d="M2.7 13.8 L5.8 9 L7.6 10.6 L11.2 5.7 L16.2 13.8Z" fill="#fff"/></svg>
<div class="a cb" style="left:1307.1px;top:638.9px"></div>
<svg style="left:1340.7px;top:639.9px" width="12.5" height="12" viewBox="0 0 12.5 12"><path d="M5.5 1.8H2.2C1.3 1.8.7 2.4.7 3.3v6.5c0 .9.6 1.5 1.5 1.5h6.5c.9 0 1.5-.6 1.5-1.5V6.5" fill="none" stroke="#6e6e6e" stroke-width="1.4"/><path d="M10.3.6l1.5 1.5c.3.3.3.8 0 1.1L6.6 8.4 4 9l.6-2.6L9.2.6c.3-.3.8-.3 1.1 0z" fill="#6e6e6e"/></svg>
<div class="a row" style="left:1270.7px;top:672px;width:575.5px">
<div class="t rt" style="left:88.0px;top:11.8px;font-size:12.5px;letter-spacing:0.000px">48e9c0006e388e3145298b08cc4730df080c000b2a7735981a8b9927e258</div>
<div class="t rt" style="left:499.4px;top:11.4px;font-size:13px">23/02/2026</div>
</div>
<svg style="left:1280.4px;top:682.4px" width="18.6" height="15.7" viewBox="0 0 18.6 15.7"><rect width="18.6" height="15.7" rx="2.5" fill="#2848cf"/><circle cx="4.5" cy="4.3" r="1.6" fill="#fff"/><path d="M2.7 13.8 L5.8 9 L7.6 10.6 L11.2 5.7 L16.2 13.8Z" fill="#fff"/></svg>
<div class="a cb" style="left:1303.4px;top:682.9px"></div>
<svg style="left:1336.0px;top:683.9px" width="12.5" height="12" viewBox="0 0 12.5 12"><path d="M5.5 1.8H2.2C1.3 1.8.7 2.4.7 3.3v6.5c0 .9.6 1.5 1.5 1.5h6.5c.9 0 1.5-.6 1.5-1.5V6.5" fill="none" stroke="#6e6e6e" stroke-width="1.4"/><path d="M10.3.6l1.5 1.5c.3.3.3.8 0 1.1L6.6 8.4 4 9l.6-2.6L9.2.6c.3-.3.8-.3 1.1 0z" fill="#6e6e6e"/></svg>
<div class="a row" style="left:1270.7px;top:716px;width:575.5px">
<div class="t rt" style="left:92.4px;top:11.8px;font-size:12.5px;letter-spacing:0.047px">47c09b6c5083468b43737e67055a3e6f9a979ebbfe3cc0bfea4f1e67bc22</div>
<div class="t rt" style="left:499.4px;top:11.4px;font-size:13px">23/02/2026</div>
</div>
<svg style="left:1280.4px;top:726.4px" width="18.6" height="15.7" viewBox="0 0 18.6 15.7"><rect width="18.6" height="15.7" rx="2.5" fill="#2848cf"/><circle cx="4.5" cy="4.3" r="1.6" fill="#fff"/><path d="M2.7 13.8 L5.8 9 L7.6 10.6 L11.2 5.7 L16.2 13.8Z" fill="#fff"/></svg>
<div class="a cb" style="left:1307.1px;top:726.9px"></div>
<svg style="left:1340.7px;top:727.9px" width="12.5" height="12" viewBox="0 0 12.5 12"><path d="M5.5 1.8H2.2C1.3 1.8.7 2.4.7 3.3v6.5c0 .9.6 1.5 1.5 1.5h6.5c.9 0 1.5-.6 1.5-1.5V6.5" fill="none" stroke="#6e6e6e" stroke-width="1.4"/><path d="M10.3.6l1.5 1.5c.3.3.3.8 0 1.1L6.6 8.4 4 9l.6-2.6L9.2.6c.3-.3.8-.3 1.1 0z" fill="#6e6e6e"/></svg>
<div class="a row" style="left:1270.7px;top:760px;width:575.5px">
<div class="t rt" style="left:92.4px;top:11.8px;font-size:12.5px;letter-spacing:0.020px">47a05692548f8f04f9e2e21131088a761c0ce104407d18657a3645ba4097</div>
<div class="t rt" style="left:499.4px;top:11.4px;font-size:13px">23/02/2026</div>
</div>
<svg style="left:1280.4px;top:770.4px" width="18.6" height="15.7" viewBox="0 0 18.6 15.7"><rect width="18.6" height="15.7" rx="2.5" fill="#2848cf"/><circle cx="4.5" cy="4.3" r="1.6" fill="#fff"/><path d="M2.7 13.8 L5.8 9 L7.6 10.6 L11.2 5.7 L16.2 13.8Z" fill="#fff"/></svg>
<div class="a cb" style="left:1307.1px;top:770.9px"></div>
<svg style="left:1340.7px;top:771.9px" width="12.5" height="12" viewBox="0 0 12.5 12"><path d="M5.5 1.8H2.2C1.3 1.8.7 2.4.7 3.3v6.5c0 .9.6 1.5 1.5 1.5h6.5c.9 0 1.5-.6 1.5-1.5V6.5" fill="none" stroke="#6e6e6e" stroke-width="1.4"/><path d="M10.3.6l1.5 1.5c.3.3.3.8 0 1.1L6.6 8.4 4 9l.6-2.6L9.2.6c.3-.3.8-.3 1.1 0z" fill="#6e6e6e"/></svg>
<!-- right end -->
<!-- sidebar -->
<div class="a" style="left:17px;top:18px;width:37px;height:37px;background:#fff;border-radius:3.5px"></div>
<svg style="left:14px;top:15px" width="44" height="44" viewBox="0 0 44 44"><path d="M25.39 17.46 A6.7 6.7 0 1 0 25.39 25.14" fill="none" stroke="#72c174" stroke-width="4"/><circle cx="20" cy="21.2" r="2.1" fill="#72c174"/><rect x="23.8" y="19.5" width="8.1" height="3.7" fill="#72c174"/></svg>
<div class="t" style="left:69px;top:20px;color:#fff;font-size:16px;font-weight:bold">Greenplayer</div>
<div class="t" style="left:70px;top:40px;color:#cbd3d3;font-size:14.5px;font-weight:bold;font-style:italic">CMS</div>
<div class="t" style="left:199px;top:42px;color:#cbd3d3;font-size:10px">v2.532</div>

<div class="a" style="left:17px;top:96px;width:220px;height:30px;background:#e5e9ea;border-radius:8px"></div>
<svg style="left:27px;top:106px" width="11" height="11" viewBox="0 0 11 11" fill="#2b5358">
  <rect x="0" y="0" width="3" height="3" rx=".6"/><rect x="4" y="0" width="3" height="3" rx=".6"/><rect x="8" y="0" width="3" height="3" rx=".6"/>
  <rect x="0" y="4" width="3" height="3" rx=".6"/><rect x="4" y="4" width="3" height="3" rx=".6"/><rect x="8" y="4" width="3" height="3" rx=".6"/>
  <rect x="0" y="8" width="3" height="3" rx=".6"/><rect x="4" y="8" width="3" height="3" rx=".6"/><rect x="8" y="8" width="3" height="3" rx=".6"/>
</svg>
<div class="t" style="left:47px;top:106px;color:#244e53;font-size:12.5px">GPDev Matthieu</div>
<svg style="left:217px;top:109px" width="10" height="6" viewBox="0 0 10 6"><path d="M.5 .5 L5 5 L9.5 .5" fill="none" stroke="#244e53" stroke-width="1.3"/></svg>

<!-- active item connector -->
<div class="a" style="left:207px;top:330px;width:50px;height:93px;background:#fff"></div>
<div class="a" style="left:187px;top:312px;width:70px;height:40px;background:#275258;border-bottom-right-radius:20px"></div>
<div class="a" style="left:187px;top:401px;width:70px;height:40px;background:#275258;border-top-right-radius:20px"></div>
<div class="a" style="left:17px;top:352px;width:240px;height:49px;background:#fff;border-radius:25px 0 0 25px"></div>
<div class="a" style="left:17px;top:450px;width:240px;height:49px;background:#77bd7b;border-radius:25px 0 0 25px"></div>

<div class="t nav" style="left:70px;top:174px">Tableau de bord</div>
<div class="t nav" style="left:70px;top:223px">Écrans</div>
<div class="t nav" style="left:70px;top:272px">Notifications</div>
<div class="t nav" style="left:70px;top:321px">Playlists</div>
<div class="t nav" style="left:70px;top:370px;color:#2b5358">Médiathèque</div>
<div class="t nav" style="left:70px;top:419px">Cloud Library</div>
<div class="t nav" style="left:70px;top:468px">Mes Modules</div>
<div class="t nav" style="left:70px;top:517px">Flux de donnée</div>
<div class="t nav" style="left:70px;top:566px">Administration</div>
<div class="t nav" style="left:70px;top:615px">Serveur</div>

<!-- toggle -->
<div class="a" style="left:99px;top:813px;width:56px;height:22px;border:1.5px solid #fff;border-radius:11px;background:linear-gradient(90deg,#77bd7b 0,#77bd7b 35%,#275258 80%)"></div>
<svg style="left:137px;top:817px" width="14" height="14" viewBox="0 0 14 14"><circle cx="7" cy="7" r="6.5" fill="#fff"/><circle cx="7" cy="7" r="2.2" fill="none" stroke="#333" stroke-width="1"/><g stroke="#333" stroke-width="1"><path d="M7 1.5v2M7 10.5v2M1.5 7h2M10.5 7h2M3.1 3.1l1.4 1.4M9.5 9.5l1.4 1.4M3.1 10.9l1.4-1.4M9.5 4.5l1.4-1.4"/></g></svg>
<!-- collapse btn -->
<div class="a" style="left:245px;top:809px;width:26px;height:26px;border-radius:13px;background:#2e7f89;border:1.5px solid #d6e4e5"></div>
<svg style="left:251px;top:815px" width="14" height="14" viewBox="0 0 14 14"><path d="M10.5 7H3M6 4 3 7 6 10M12 3.5v7" fill="none" stroke="#fff" stroke-width="1.8"/></svg>

<!-- user -->
<div class="a" style="left:17px;top:875px;width:220px;height:50px;background:#52767a;border-radius:10px"></div>
<div class="a" style="left:27px;top:885px;width:30px;height:30px;background:#fff;border-radius:15px"></div>
<svg style="left:35px;top:892px" width="14" height="16" viewBox="0 0 14 16"><circle cx="7" cy="4.5" r="3" fill="none" stroke="#222" stroke-width="1.4"/><path d="M1.5 14.5v-2a3 3 0 0 1 3-3h5a3 3 0 0 1 3 3v2z" fill="none" stroke="#222" stroke-width="1.4"/></svg>
<div class="t" style="left:72px;top:894px;color:#fff;font-size:13px;font-weight:bold">Matthieu</div>
<div class="t" style="left:1818px;top:926px;color:#c6d2d2;font-size:13px">by Greenplayer</div>


<!-- icons start -->
<svg style="left:34px;top:173.5px" width="17" height="17" viewBox="0 0 17 17"><circle cx="8.5" cy="8.5" r="7.2" fill="none" stroke="#fff" stroke-width="1.6"/><path d="M8.5 3.8v6.2" stroke="#fff" stroke-width="1.5"/><circle cx="8.5" cy="10.8" r="1.7" fill="#fff"/><circle cx="4.7" cy="8" r=".9" fill="#fff"/><circle cx="12.3" cy="8" r=".9" fill="#fff"/><circle cx="5.6" cy="5" r=".8" fill="#fff"/><circle cx="11.4" cy="5" r=".8" fill="#fff"/></svg>
<svg style="left:34.5px;top:223px" width="19" height="15.5" viewBox="0 0 19 15.5"><rect x="1" y="1" width="16.8" height="10.5" rx="1.3" fill="none" stroke="#fff" stroke-width="1.6"/><rect x="3.2" y="13.2" width="12.3" height="1.8" fill="#fff"/></svg>
<svg style="left:34.5px;top:272.5px" width="16" height="14" viewBox="0 0 16 14"><path d="M8 1C4.2 1 1.2 3.3 1.2 6.2c0 1.4.7 2.6 1.8 3.5-.2 1.2-.9 2.2-1.8 3 1.7 0 3.2-.6 4.2-1.4.8.3 1.7.4 2.6.4 3.8 0 6.8-2.3 6.8-5.5S11.8 1 8 1z" fill="none" stroke="#fff" stroke-width="1.5"/><path d="M8 3.5v3.5" stroke="#fff" stroke-width="1.6"/><circle cx="8" cy="8.8" r=".9" fill="#fff"/></svg>
<svg style="left:35px;top:321px" width="16" height="15.5" viewBox="0 0 16 15.5"><path d="M8 .8 15 4.3 8 7.8 1 4.3z" fill="none" stroke="#fff" stroke-width="1.5" stroke-linejoin="round"/><path d="M1.3 7.6 8 11 14.7 7.6" fill="none" stroke="#fff" stroke-width="1.5" stroke-linejoin="round"/><path d="M1.3 10.9 8 14.5 14.7 10.9" fill="none" stroke="#fff" stroke-width="1.5" stroke-linejoin="round"/></svg>
<svg style="left:34.6px;top:370.2px" width="18.4" height="15" viewBox="5 7 30 24.5"><path d="M12.4 12.2H7.6a1.3 1.3 0 0 0-1.3 1.3V25.6a1.3 1.3 0 0 0 1.3 1.3H20" fill="none" stroke="#2b5358" stroke-width="2.3"/><path d="M12.4 11.5V27" stroke="#2b5358" stroke-width="2"/><rect x="7.9" y="14.3" width="2.4" height="2.2" fill="#2b5358"/><rect x="7.9" y="18.6" width="2.4" height="2.2" fill="#2b5358"/><rect x="7.9" y="22.8" width="2.4" height="2.2" fill="#2b5358"/><path d="M21.5 20.7H16.4a1.3 1.3 0 0 1-1.3-1.3V9.4a1.3 1.3 0 0 1 1.3-1.3H32.6a1.3 1.3 0 0 1 1.3 1.3V13" fill="none" stroke="#2b5358" stroke-width="2.3"/><circle cx="18.8" cy="11.6" r="1.5" fill="#2b5358"/><path d="M17.8 18.6 21.6 14.6 23.2 15.6 26 12.2 28.2 14.6" fill="none" stroke="#2b5358" stroke-width="1.8"/><path d="M24.4 17.6 34.9 15.3V19L26 21Z" fill="#2b5358"/><rect x="24.4" y="17.6" width="1.8" height="11" fill="#2b5358"/><rect x="33.1" y="15.3" width="1.8" height="10.5" fill="#2b5358"/><ellipse cx="22.9" cy="28.6" rx="2.9" ry="2.3" fill="#2b5358"/><ellipse cx="31.7" cy="25.6" rx="2.9" ry="2.3" fill="#2b5358"/></svg>
<svg style="left:34.5px;top:419.5px" width="19" height="14" viewBox="0 0 19 14"><path d="M4.5 13C2.5 13 1 11.5 1 9.6c0-1.7 1.2-3.1 2.8-3.4C4.3 3.2 6.7 1 9.6 1c2.6 0 4.8 1.8 5.4 4.3 1.7.4 3 1.9 3 3.8 0 2.2-1.7 3.9-3.9 3.9z" fill="none" stroke="#fff" stroke-width="1.5" stroke-linejoin="round"/></svg>
<svg style="left:34.8px;top:468.3px" width="16.5" height="15" viewBox="0 0 16.5 15" fill="#fff"><path d="M4.3 0h1.8v2.2h3V0h1.9v6.4H4.3z"/><path d="M0 7.6h2.2v2.2h3V7.6h2.5v7.1H.5c-.3 0-.5-.2-.5-.5z"/><path d="M8.8 7.6h2.5v2.2h3V7.6h2.2v6.6c0 .3-.2.5-.5.5H8.8z"/></svg>
<svg style="left:35.5px;top:516.5px" width="14.5" height="16" viewBox="0 0 14.5 16"><ellipse cx="7.25" cy="3" rx="6" ry="2.2" fill="none" stroke="#fff" stroke-width="1.5"/><path d="M1.25 3v10c0 1.2 2.7 2.2 6 2.2s6-1 6-2.2V3" fill="none" stroke="#fff" stroke-width="1.5"/><path d="M1.25 6.5c0 1.2 2.7 2.2 6 2.2s6-1 6-2.2M1.25 9.8c0 1.2 2.7 2.2 6 2.2s6-1 6-2.2" fill="none" stroke="#fff" stroke-width="1.5"/></svg>
<svg style="left:34.5px;top:566px" width="16" height="15.5" viewBox="0 0 16 15.5"><path d="M1.5 1.5 3.3.6l4.5 4.5-1.3 1.3z" fill="#fff"/><path d="M7 7.3 2.4 11.9c-.6.6-.6 1.5 0 2 .6.6 1.5.6 2 0L9 9.3" fill="none" stroke="#fff" stroke-width="1.4"/><path d="M6.7 8.3l6.5 6.5 1.8-1.8-6.5-6.5z" fill="#fff"/><path d="M9.2 5.6C8.8 3.4 10.6 1.2 13 1.5l-1.5 1.8.4 1.6 1.6.4 1.8-1.5c.2 2.4-2 4.2-4.2 3.8" fill="none" stroke="#fff" stroke-width="1.4"/></svg>
<svg style="left:34.5px;top:616px" width="16" height="14" viewBox="0 0 16 14"><rect x=".8" y=".8" width="14.4" height="5" rx="1.5" fill="none" stroke="#fff" stroke-width="1.5"/><rect x=".8" y="7.9" width="14.4" height="5" rx="1.5" fill="none" stroke="#fff" stroke-width="1.5"/><path d="M10.5 3.3h2.2M10.5 10.4h2.2" stroke="#fff" stroke-width="1.2" opacity=".7"/></svg>
<!-- icons end -->
</body></html>
